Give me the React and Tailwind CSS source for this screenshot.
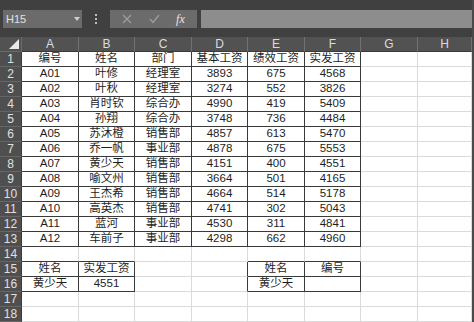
import React from "react";

const COLS = ["A", "B", "C", "D", "E", "F", "G", "H"];

const rows = [
  ["编号", "姓名", "部门", "基本工资", "绩效工资", "实发工资"],
  ["A01", "叶修", "经理室", "3893", "675", "4568"],
  ["A02", "叶秋", "经理室", "3274", "552", "3826"],
  ["A03", "肖时钦", "综合办", "4990", "419", "5409"],
  ["A04", "孙翔", "综合办", "3748", "736", "4484"],
  ["A05", "苏沐橙", "销售部", "4857", "613", "5470"],
  ["A06", "乔一帆", "事业部", "4878", "675", "5553"],
  ["A07", "黄少天", "销售部", "4151", "400", "4551"],
  ["A08", "喻文州", "销售部", "3664", "501", "4165"],
  ["A09", "王杰希", "销售部", "4664", "514", "5178"],
  ["A10", "高英杰", "销售部", "4741", "302", "5043"],
  ["A11", "蓝河", "事业部", "4530", "311", "4841"],
  ["A12", "车前子", "事业部", "4298", "662", "4960"],
  [],
  ["姓名", "实发工资", "", "", "姓名", "编号"],
  ["黄少天", "4551", "", "", "黄少天", ""],
  [],
  [],
];

// bordered ranges: [r1, c1, r2, c2] (1-based rows, 0-based cols)
const tables = [
  [1, 0, 13, 5],
  [15, 0, 16, 1],
  [15, 4, 16, 5],
];

const inTable = (r, c) =>
  tables.some(([r1, c1, r2, c2]) => r >= r1 && r <= r2 && c >= c1 && c <= c2);

const Cell = ({ r, c, text }) => {
  const darkRight = inTable(r, c) || inTable(r, c + 1);
  const darkBottom = inTable(r, c) || inTable(r + 1, c);
  return (
    <div
      className={
        "h-[15px] flex items-center justify-center border-r border-b text-[11.5px] leading-none text-[#1e1e1e] whitespace-nowrap overflow-hidden " +
        (darkRight ? "border-r-[#3a3a3a] " : "border-r-[#dadada] ") +
        (darkBottom ? "border-b-[#3a3a3a]" : "border-b-[#dadada]")
      }
    >
      {text}
    </div>
  );
};

const App = () => {
  return (
    <div
      className="w-[474px] h-[322px] overflow-hidden bg-[#4a4a4a] pr-[2px]"
      style={{ fontFamily: '"Liberation Sans", "Noto Sans CJK SC", sans-serif' }}
    >
      {/* formula bar */}
      <div className="h-[37px] bg-[#404040] flex items-center pl-[3px] pt-[1px]">
        <div className="w-[79px] h-[18px] bg-[#6b6b6b] flex items-center justify-between pl-[3px] pr-[2px]">
          <span className="text-[11px] text-[#e2e2e2]">H15</span>
          <svg width="6" height="4" viewBox="0 0 6 4">
            <path d="M0 0 L6 0 L3 4 Z" fill="#d0d0d0" />
          </svg>
        </div>
        <div className="w-[28px] flex flex-col items-center gap-[2px]">
          <span className="w-[2px] h-[2px] bg-[#bdbdbd]" />
          <span className="w-[2px] h-[2px] bg-[#bdbdbd]" />
          <span className="w-[2px] h-[2px] bg-[#bdbdbd]" />
        </div>
        <div className="w-[87px] h-[18px] bg-[#6b6b6b] flex items-center justify-around px-[4px]">
          <svg width="10" height="10" viewBox="0 0 10 10">
            <path d="M1 1 L9 9 M9 1 L1 9" stroke="#9c9c9c" strokeWidth="1.3" />
          </svg>
          <svg width="11" height="10" viewBox="0 0 11 10">
            <path d="M1 5 L4 8.5 L10 1" stroke="#9c9c9c" strokeWidth="1.3" fill="none" />
          </svg>
          <span
            className="text-[12px] italic text-[#e6e6e6] leading-none"
            style={{ fontFamily: '"Liberation Serif", serif' }}
          >
            fx
          </span>
        </div>
        <div className="ml-[4px] flex-1 h-[18px] bg-[#8d8d8d]" />
      </div>

      {/* sheet grid */}
      <div className="grid grid-cols-[22px_57px_56px_57px_56px_57px_56px_57px_54px] bg-white">
        {/* column headers */}
        <div className="h-[15px] bg-[#525252] border-r border-b border-[#6a6a6a] relative">
          <svg className="absolute right-[2px] bottom-[2px]" width="10" height="10" viewBox="0 0 10 10">
            <path d="M10 0 L10 10 L0 10 Z" fill="#e8e8e8" />
          </svg>
        </div>
        {COLS.map((l) => (
          <div
            key={l}
            className="h-[15px] bg-[#525252] border-r border-b border-r-[#727272] border-b-[#3a3a3a] flex items-center justify-center text-[12px] text-[#dcdcdc] leading-none"
          >
            {l}
          </div>
        ))}

        {rows.map((row, i) => {
          const r = i + 1;
          return (
            <React.Fragment key={r}>
              <div className="h-[15px] bg-[#4f4f4f] border-r border-b border-r-[#3a3a3a] border-b-[#666666] flex items-center justify-center text-[12px] text-[#e0e0e0] leading-none">
                {r}
              </div>
              {COLS.map((_, c) => (
                <Cell key={c} r={r} c={c} text={row[c] || ""} />
              ))}
            </React.Fragment>
          );
        })}
      </div>
    </div>
  );
};

export default App;
